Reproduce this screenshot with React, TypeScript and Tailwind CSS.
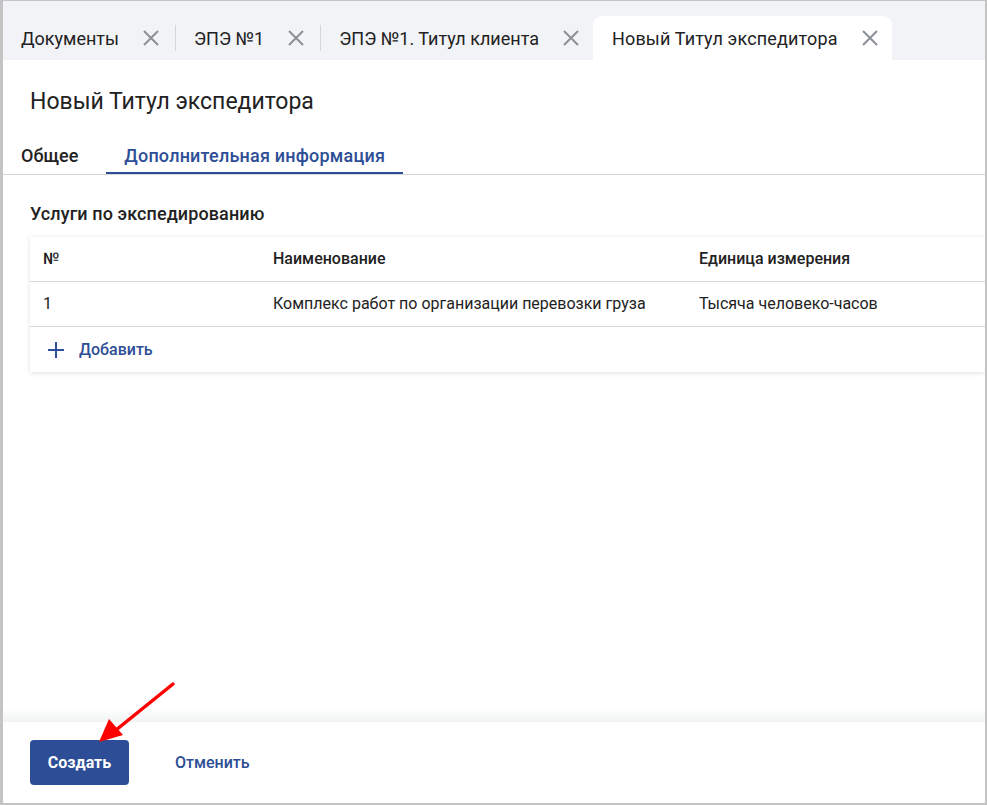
import React from 'react';

const tabs = [
  { title: 'Документы', active: false },
  { title: 'ЭПЭ №1', active: false },
  { title: 'ЭПЭ №1. Титул клиента', active: false },
  { title: 'Новый Титул экспедитора', active: true },
];

function CloseIcon() {
  return (
    <svg width="16" height="16" viewBox="0 0 16 16" className="shrink-0">
      <path d="M1 1 L15 15 M15 1 L1 15" stroke="#8b9098" strokeWidth="2" strokeLinecap="butt" />
    </svg>
  );
}

export default function App() {
  return (
    <div
      className="relative w-[987px] h-[805px] overflow-hidden bg-white border-t border-r-2 border-b-2 border-l-[3px] border-[#c4c4c4] flex flex-col text-[#212121]"
      style={{ fontFamily: 'Roboto, "Noto Sans", sans-serif' }}
    >
      {/* Tab strip */}
      <div className="h-[59px] shrink-0 bg-[#f2f3f7] flex items-end">
        {tabs.map((tab, i) => {
          const next = tabs[i + 1];
          const showSep = !tab.active && next && !next.active;
          return (
            <div key={tab.title} className="flex items-center h-[44px]">
              <div
                className={`flex items-center h-full pl-[18px] pr-[14px] gap-[24px] text-[18px] ${
                  tab.active ? 'bg-white rounded-t-[9px] pl-[19px] tracking-[0.15px]' : ''
                }`}
              >
                <span className="pt-[1px]">{tab.title}</span>
                <CloseIcon />
              </div>
              {showSep && <div className="w-px h-[26px] bg-[#d4d6db] ml-[2px]" />}
            </div>
          );
        })}
      </div>

      {/* Body */}
      <div className="flex-1 flex flex-col">
        <h1 className="pl-[27px] pt-[27px] text-[23px] leading-[30px] font-normal text-[#222]">
          Новый Титул экспедитора
        </h1>

        <div className="mt-[27px] flex border-b border-[#d6d6d6]">
          <div className="px-[18px] pb-[6px] text-[18px] leading-[24px] font-medium text-[#222]">Общее</div>
          <div className="ml-[10px] px-[18px] pb-[4px] text-[18px] leading-[24px] font-medium tracking-[0.2px] text-[#2d4e96] border-b-2 border-[#2d4e96]">
            Дополнительная информация
          </div>
        </div>

        <div className="pl-[27px] pt-[27px]">
          <div className="text-[18px] leading-[24px] font-medium tracking-[0.1px] text-[#222]">Услуги по экспедированию</div>
          <div className="mt-[11px] bg-white shadow-[0_1px_5px_rgba(0,0,0,0.12)] text-[16px]">
            <div className="grid grid-cols-[243px_426px_1fr] h-[45px] items-center border-b border-[#d9d9d9] font-medium text-[#222]">
              <div className="pl-[13px]">№</div>
              <div>Наименование</div>
              <div>Единица измерения</div>
            </div>
            <div className="grid grid-cols-[243px_426px_1fr] h-[45px] items-center border-b border-[#d9d9d9] text-[#222]">
              <div className="pl-[13px]">1</div>
              <div>Комплекс работ по организации перевозки груза</div>
              <div>Тысяча человеко-часов</div>
            </div>
            <div className="h-[45px] flex items-center pl-[18px] gap-[15px] font-medium text-[#2d4e96]">
              <svg width="16" height="16" viewBox="0 0 16 16">
                <path d="M8 0 V16 M0 8 H16" stroke="#2d4e96" strokeWidth="2" />
              </svg>
              <span>Добавить</span>
            </div>
          </div>
        </div>
      </div>

      {/* Footer */}
      <div className="h-[14px] shrink-0 bg-gradient-to-b from-white to-[#f1f3f3]" />
      <div className="h-[81px] shrink-0 flex items-center pl-[27px] gap-[46px]">
        <button className="w-[99px] h-[45px] rounded-[4px] bg-[#2d4e96] text-white text-[16px] font-bold">
          Создать
        </button>
        <button className="text-[16px] font-medium text-[#2d4e96]">Отменить</button>
      </div>

      {/* Annotation arrow */}
      <svg className="absolute left-0 top-0 pointer-events-none" width="987" height="805">
        <line x1="170" y1="683" x2="113" y2="729" stroke="#ff0000" strokeWidth="3.5" strokeLinecap="round" />
        <polygon points="96,741 106,718 120,734" fill="#ff0000" />
      </svg>
    </div>
  );
}
